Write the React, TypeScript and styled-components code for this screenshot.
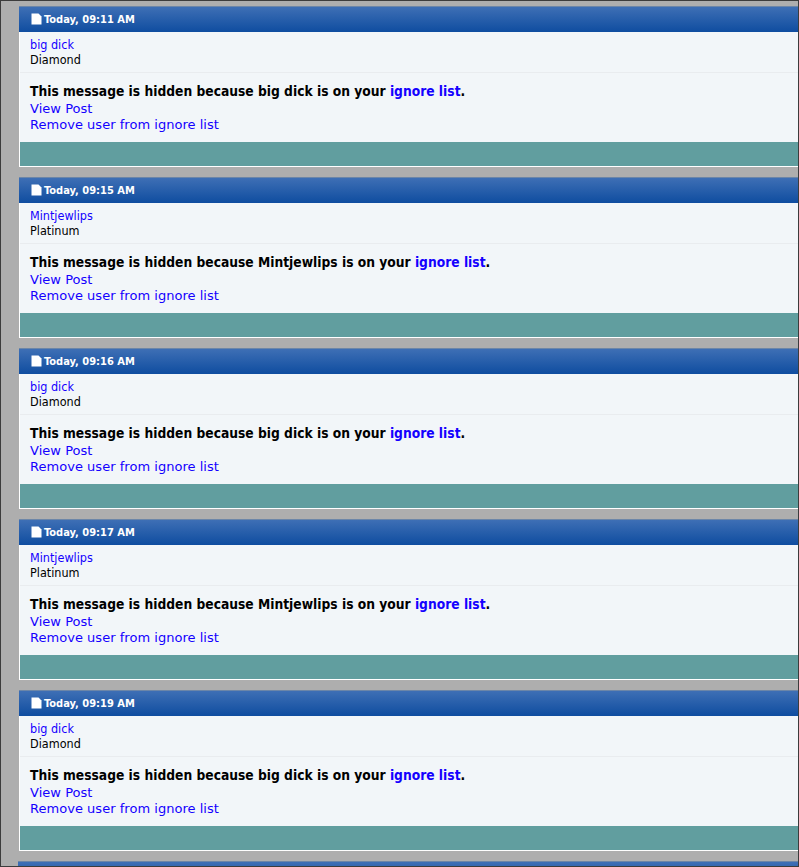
import React from "react";
import styled, { createGlobalStyle } from "styled-components";

const Global = createGlobalStyle`
  html, body { margin: 0; padding: 0; background: #aeaeae; }
  body { width: 799px; height: 867px; overflow: hidden; font-family: "DejaVu Sans", Verdana, sans-serif; }
`;

const Page = styled.div`
  box-sizing: border-box;
  width: 799px;
  height: 867px;
  overflow: hidden;
  border: 1px solid #3c3c3c;
  background: #aeaeae;
  padding: 5px 0 0 18px;
  display: flex;
  flex-direction: column;
  gap: 10px;
`;

const Post = styled.div`
  flex: none;
  width: 790px;
  height: 161px;
  display: flex;
  flex-direction: column;
  border: 1px solid #fff;
  border-top: 0;
  border-right: 0;
  box-sizing: border-box;
  background: #f2f6f9;
`;

const Header = styled.div`
  flex: none;
  height: 26px;
  display: flex;
  align-items: center;
  gap: 2px;
  margin-left: -1px;
  padding: 0 0 1px 12px;
  background: linear-gradient(#3e6fb5, #0f4da0);
  border-top: 1px solid #6c86a8;
  box-sizing: border-box;
  color: #fff;
  font: bold 11px "DejaVu Sans Condensed", "DejaVu Sans", sans-serif;
`;

const UserBlock = styled.div`
  flex: none;
  height: 41px;
  box-sizing: border-box;
  padding: 5px 0 0 10px;
  border-bottom: 1px solid #e9ecef;
  font: 12.5px/15px "DejaVu Sans Condensed", "DejaVu Sans", sans-serif;
  color: #000;
`;

const NameLink = styled.a`
  display: block;
  color: #1400ff;
`;

const Body = styled.div`
  flex: 1;
  padding: 10px 0 0 10px;
  font-size: 13px;
  line-height: 16px;
  letter-spacing: 0.03px;
`;

const Notice = styled.div`
  margin-bottom: 1px;
  font: bold 13.7px/17px "DejaVu Sans Condensed", "DejaVu Sans", sans-serif;
  letter-spacing: 0;
  color: #000;
`;

const InlineLink = styled.a`
  color: #1400ff;
`;

const BodyLink = styled.a`
  display: block;
  color: #1400ff;
`;

const Footer = styled.div`
  flex: none;
  height: 24px;
  background: #619e9f;
`;

const DocIcon = () => (
  <svg width="11" height="12" viewBox="0 0 11 12" aria-hidden="true">
    <path d="M0.5 0.5H7.5L10.5 3.5V11.5H0.5Z" fill="#fff" />
  </svg>
);

const posts = [
  { time: "09:11", name: "big dick", rank: "Diamond" },
  { time: "09:15", name: "Mintjewlips", rank: "Platinum" },
  { time: "09:16", name: "big dick", rank: "Diamond" },
  { time: "09:17", name: "Mintjewlips", rank: "Platinum" },
  { time: "09:19", name: "big dick", rank: "Diamond" },
];

export default function App() {
  return (
    <Page>
      <Global />
      {posts.map((p) => (
        <Post key={p.time}>
          <Header>
            <DocIcon />
            Today, {p.time} AM
          </Header>
          <UserBlock>
            <NameLink>{p.name}</NameLink>
            {p.rank}
          </UserBlock>
          <Body>
            <Notice>
              This message is hidden because {p.name} is on your <InlineLink>ignore list</InlineLink>.
            </Notice>
            <BodyLink>View Post</BodyLink>
            <BodyLink>Remove user from ignore list</BodyLink>
          </Body>
          <Footer />
        </Post>
      ))}
      <Header />
    </Page>
  );
}
